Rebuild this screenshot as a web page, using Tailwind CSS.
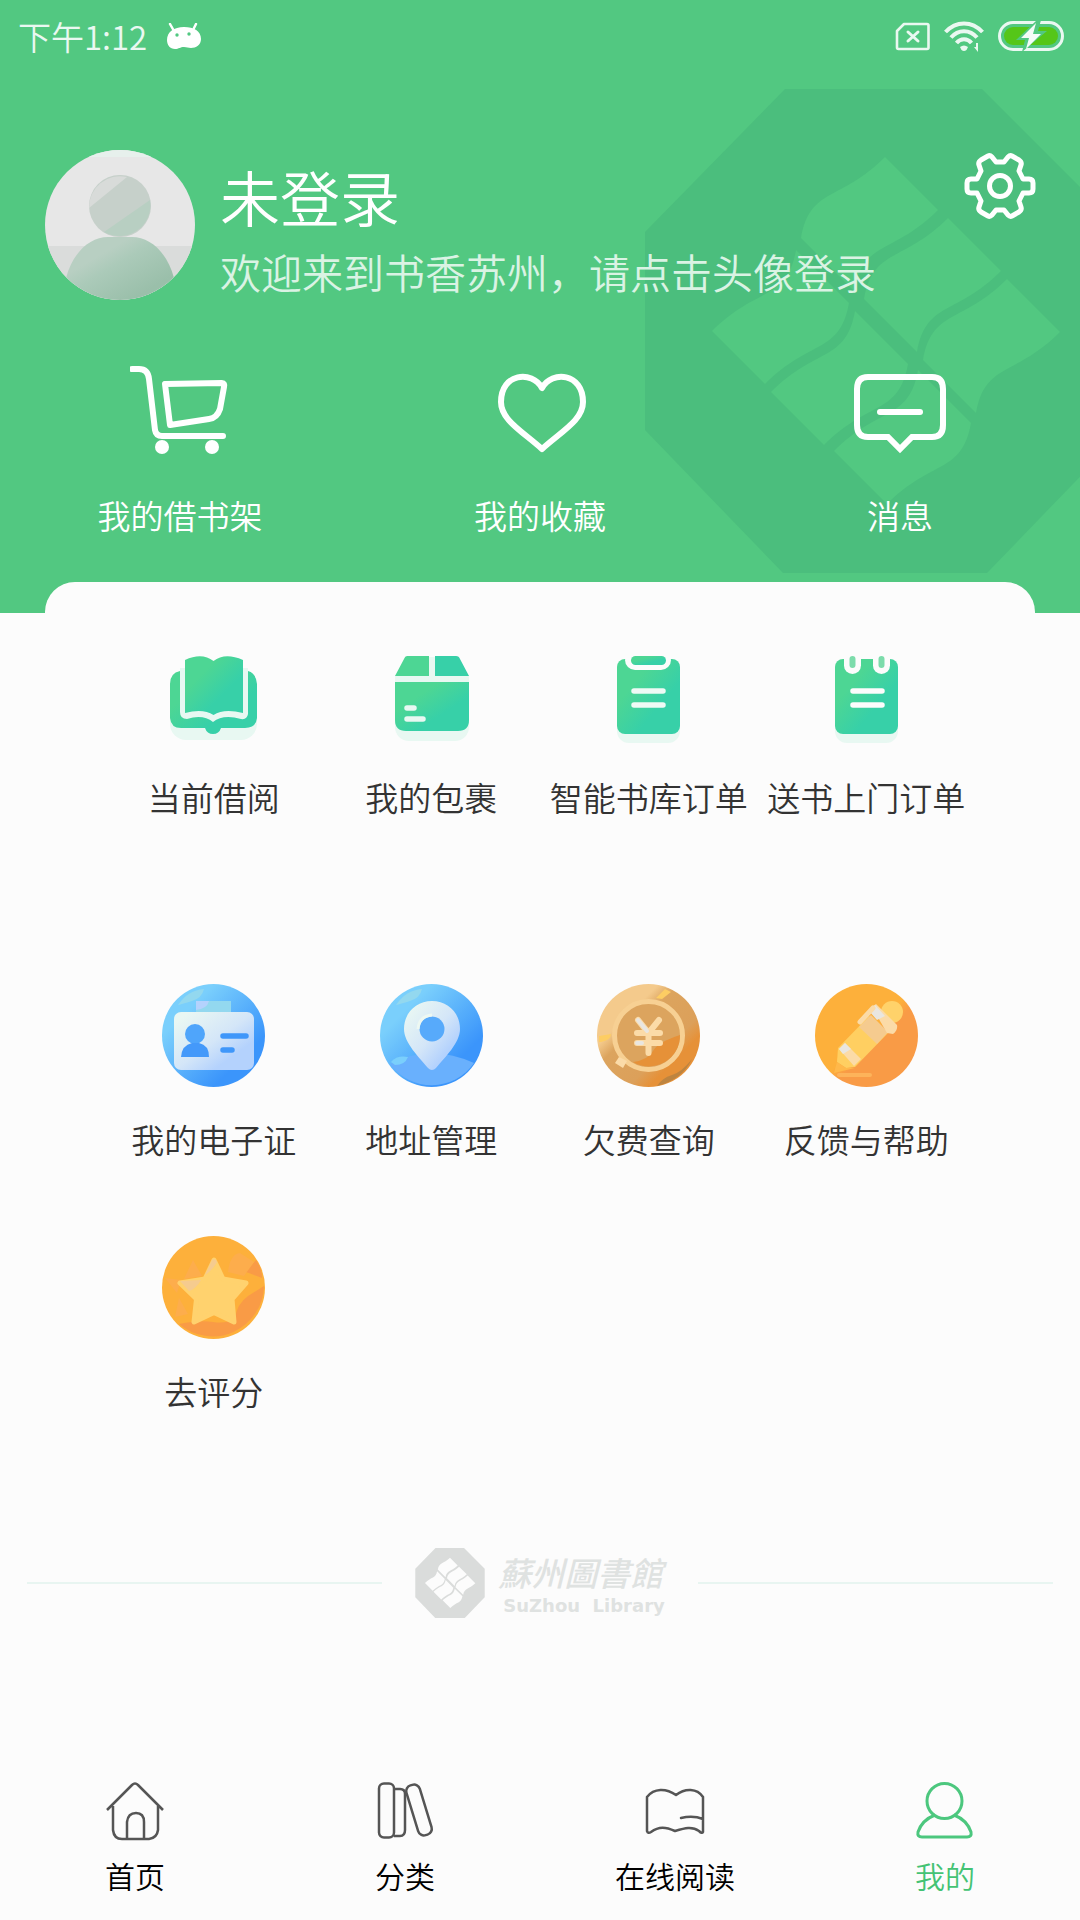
<!DOCTYPE html>
<html lang="zh-CN">
<head>
    <meta charset="UTF-8">
    <meta name="viewport" content="width=device-width, initial-scale=1.0">
    <title>书香苏州</title>
    <script src="https://cdn.jsdelivr.net/npm/@tailwindcss/browser@4"></script>
    <style>
        body {
            font-family: 'Noto Sans CJK SC', 'Noto Sans', sans-serif;
        }
    </style>
</head>
<body class="min-h-screen flex flex-col bg-[#fcfcfc] text-[#333] font-[350]">
    <!-- shared gradients and the library emblem -->
    <svg class="absolute w-0 h-0" aria-hidden="true">
        <defs>
            <linearGradient id="green" x1="0" y1="0" x2="1" y2="1">
                <stop offset=".3" stop-color="#4dd694" />
                <stop offset=".65" stop-color="#37d0a8" />
            </linearGradient>
            <linearGradient id="blue" x1="0" y1="0" x2="1" y2="1">
                <stop offset=".25" stop-color="#7acffc" />
                <stop offset=".75" stop-color="#3b95fb" />
            </linearGradient>
            <linearGradient id="paper" x1="0" y1="0" x2="1" y2="1">
                <stop offset=".1" stop-color="#e9f7f3" />
                <stop offset=".5" stop-color="#d4e6f8" />
                <stop offset=".75" stop-color="#b4d2fd" />
            </linearGradient>
            <linearGradient id="gold" x1="0" y1="0" x2="1" y2="1">
                <stop offset=".3" stop-color="#f4ca8c" />
                <stop offset=".4" stop-color="#dca45e" />
                <stop offset=".65" stop-color="#dca05a" />
                <stop offset=".75" stop-color="#e69138" />
            </linearGradient>
            <linearGradient id="orange" x1="0" y1="0" x2="1" y2="1">
                <stop offset=".5" stop-color="#fdb03b" />
                <stop offset=".58" stop-color="#f99b46" />
            </linearGradient>
            <linearGradient id="body" x1="0" y1="0" x2="1" y2="1">
                <stop offset=".3" stop-color="#b8cfc2" />
                <stop offset=".45" stop-color="#abcab9" />
                <stop offset=".8" stop-color="#9abfaa" />
            </linearGradient>
            <path id="emblem" fill-rule="evenodd" d="M140 0H337L480 143V341L342 484H138L0 341V143Z
                M240 68l53 53c-45 45-75 30-84 81l-53-53c9-51 39-36 84-81Z
                M303 129l53 53c-45 45-75 30-84 81l-53-53c9-51 39-36 84-81Z
                M362 190l53 53c-45 45-75 30-84 81l-53-53c9-51 39-36 84-81Z
                M151 161l53 53c-9 51-39 36-84 81l-53-53c45-45 75-30 84-81Z
                M210 222l53 53c-9 51-39 36-84 81l-53-53c45-45 75-30 84-81Z
                M273 281l53 53c-9 51-39 36-84 81l-53-53c45-45 75-30 84-81Z" />
        </defs>
    </svg>

    <header class="relative overflow-hidden bg-[#52c881] text-white pb-[74px]">
        <svg class="absolute top-[89px] right-0 w-[435px] h-[484px] text-[#4bbe7d]" viewBox="0 0 435 484" fill="currentColor"><use href="#emblem" /></svg>

        <div class="relative flex items-center justify-between h-[72px] pl-[18px] pr-4">
            <div class="flex items-center gap-5">
                <span class="text-[33px] leading-[40px] text-[#eaf8f1]">下午1:12</span>
                <svg class="w-[34px] h-[27px]" viewBox="0 0 34 27">
                    <path d="M3 1l4 7M29 1l-3 6" stroke="#fff" stroke-width="2.5" stroke-linecap="round" />
                    <path fill="#fff" d="M0 17C0 9 7 4 17 4s17 4 17 12c0 6-5 9-10 9-3 0-4-1-7-1-4 0-5 2-9 2-5 0-8-4-8-9Z" />
                    <circle cx="10" cy="12" r="1.7" fill="#52c881" />
                    <circle cx="22" cy="11" r="1.7" fill="#52c881" />
                </svg>
            </div>
            <div class="flex items-center gap-[14px]">
                <svg class="w-[35px] h-[29px]" viewBox="0 0 35 29" fill="none" stroke="#eaf8f1" stroke-width="2.6" stroke-linejoin="round" stroke-linecap="round">
                    <path d="M9 2H32Q33.500 2 33.500 3.500V25.500Q33.500 27 32 27H3.500Q2 27 2 25.500V9Z" />
                    <path d="M13 10l10 9M23 10l-10 9" stroke-width="3" />
                </svg>
                <svg class="w-10 h-[31px]" viewBox="0 0 40 31" fill="none" stroke="#eaf8f1" stroke-width="4">
                    <path d="M1.500 11C12-.5 28-.5 38.500 11M7 16.500c7-8.500 19-8.500 26 0M12.500 22c4-5 11-5 15 0" />
                    <path fill="#eaf8f1" stroke="none" d="M16 26q4-3 8 0l-1.500 3q-2.500 2-5 0ZM32 22h2v9l-4-5h2Z" />
                </svg>
                <svg class="w-[66px] h-[30px]" viewBox="0 0 66 30">
                    <rect x="1.500" y="1.500" width="63" height="27" rx="13.500" fill="none" stroke="#eaf8f1" stroke-width="3" />
                    <rect x="6" y="6" width="54" height="18" rx="9" fill="#55c618" />
                    <path fill="#52c881" d="M39-1 18 19h9l-3 12 25-21h-9l3-11Z" />
                    <path fill="#f4fcf8" d="M38 2 23 17h8l-3 11 15-15h-8Z" />
                </svg>
            </div>
        </div>

        <div class="relative flex items-start px-[45px] pt-[78px]">
            <a href="#login" aria-label="头像" class="shrink-0">
                <svg class="w-[150px] h-[150px]" viewBox="0 0 150 150">
                    <clipPath id="round"><circle cx="75" cy="75" r="75" /></clipPath>
                    <g clip-path="url(#round)">
                        <path fill="#e7e7e7" d="M0 0h150v150H0Z" />
                        <path fill="#dadcdb" d="M0 96h150v54H0Z" />
                        <path fill="#e7f0ec" d="M40 0h70v7H40Z" />
                        <path fill="url(#body)" d="M21 128C28 102 45 87 63 87h24c18 0 35 15 42 41v22H21Z" />
                        <circle cx="75" cy="56" r="31" fill="#c6d0ca" />
                        <path fill="#d8dbd9" d="M44 58A31 31 0 0 1 82 27Z" />
                        <path fill="#b8cfc2" d="M105 50A31 31 0 0 1 59 82Z" />
                    </g>
                </svg>
            </a>
            <div class="grow pl-[25px] pt-2">
                <h1 class="text-[60px] leading-[76px]">未登录</h1>
                <p class="mt-3 text-[41px] leading-[50px] text-[#daf3e4] whitespace-nowrap">欢迎来到书香苏州，请点击头像登录</p>
            </div>
            <button type="button" aria-label="设置" class="absolute top-[78px] right-11">
                <svg class="w-[72px] h-[72px]" viewBox="0 0 72 72" fill="none" stroke="#fff" stroke-width="5" stroke-linejoin="round">
                    <path d="M32 12h8l4-5q2-2 4-1l7 4q3 2 2 5l-2 6 4 8h6q4 0 4 4v6q0 4-4 4h-6l-4 8 2 6q1 3-2 5l-7 4q-2 1-4-1l-4-5h-8l-4 5q-2 2-4 1l-7-4q-3-2-2-5l2-6-4-8H7q-4 0-4-4v-6q0-4 4-4h6l4-8-2-6q-1-3 2-5l7-4q2-1 4 1Z" />
                    <circle cx="36" cy="36" r="10.500" />
                </svg>
            </button>
        </div>

        <nav class="relative grid grid-cols-3 pt-[65px] text-[33px] leading-[48px]">
            <a href="#cart" class="flex flex-col items-center gap-9">
                <svg class="w-[100px] h-[90px]" viewBox="0 0 100 90" fill="none" stroke="#fff" stroke-width="6" stroke-linecap="round" stroke-linejoin="round">
                    <path d="M2 4h7q9 0 10 10l6 51q1 6 7 6h61" />
                    <path d="M35 19l57-1q3 0 2 4l-4 22q-3 9-11 10L40 60Z" />
                    <circle cx="32" cy="82" r="7" fill="#fff" stroke="none" />
                    <circle cx="82" cy="82" r="7" fill="#fff" stroke="none" />
                </svg>
                <span>我的借书架</span>
            </a>
            <a href="#favorites" class="flex flex-col items-center gap-9">
                <svg class="w-[100px] h-[90px]" viewBox="0 0 100 90" fill="none" stroke="#fff" stroke-width="6" stroke-linejoin="round">
                    <path d="M52 23C42 5 11 8 11 37 11 55 32 66 52 84 72 66 93 55 93 37 93 8 62 5 52 23Z" />
                </svg>
                <span>我的收藏</span>
            </a>
            <a href="#messages" class="flex flex-col items-center gap-9">
                <svg class="w-[100px] h-[90px]" viewBox="0 0 100 90" fill="none" stroke="#fff" stroke-width="6" stroke-linecap="round">
                    <path d="M18 12H82Q93 12 93 24V60Q93 72 82 72H62L50 84 38 72H18Q7 72 7 60V24Q7 12 18 12Z" />
                    <path d="M30 47h40" />
                </svg>
                <span>消息</span>
            </a>
        </nav>
    </header>

    <main class="relative -mt-[31px] mx-[45px] px-[60px] pt-[60px] bg-[#fcfcfc] rounded-t-[30px] text-[33px] leading-[48px] whitespace-nowrap">
        <section class="grid grid-cols-4">
            <a href="#borrowed" class="flex flex-col items-center gap-7">
                <svg class="w-[103px] h-[103px]" viewBox="0 0 103 103">
                    <rect x="8" y="60" width="87" height="38" rx="16" fill="#e8f8f2" />
                    <path fill="url(#green)" d="M18 29Q8 31 8 42V76Q9 86 19 86H43Q45 92 51 92T59 86H83Q94 86 95 76V42Q94 31 86 29L80 74H24Z" />
                    <path fill="#e8f8f2" d="M18 26h68v46q-1 6-7 5Q61 72 51 80 41 72 25 77q-7 0-7-7Z" />
                    <path fill="url(#green)" d="M23 18Q40 10 51.500 19 63 10 81 18V71Q62 66 51.500 73 41 66 23 71Z" />
                </svg>
                <span>当前借阅</span>
            </a>
            <a href="#parcels" class="flex flex-col items-center gap-7">
                <svg class="w-[103px] h-[103px]" viewBox="0 0 103 103">
                    <rect x="15" y="60" width="74" height="39" rx="14" fill="#e8f8f2" />
                    <path fill="#e8f8f2" d="M15 33h74v9H15ZM48 15h8v20h-8Z" />
                    <path fill="#4dd694" d="M27 14H49V34H15L24 17Q25 14 27 14Z" />
                    <path fill="#37d0a8" d="M55 14H76Q79 14 80 17L89 34H55Z" />
                    <path fill="url(#green)" d="M15 40H89V78Q89 89 78 89H26Q15 89 15 78Z" />
                    <path stroke="#e8f8f2" stroke-width="5.500" stroke-linecap="round" d="M27 66h7M27 77h16" />
                </svg>
                <span>我的包裹</span>
            </a>
            <a href="#smart-orders" class="flex flex-col items-center gap-7">
                <svg class="w-[103px] h-[103px]" viewBox="0 0 103 103">
                    <rect x="20" y="60" width="63" height="41" rx="12" fill="#e8f8f2" />
                    <rect x="20" y="17" width="63" height="75" rx="8" fill="url(#green)" />
                    <rect x="28" y="8" width="46" height="20" rx="10" fill="#fcfcfc" />
                    <rect x="34" y="14" width="35" height="9" rx="4.500" fill="url(#green)" />
                    <path stroke="#eefaf5" stroke-width="5.500" stroke-linecap="round" d="M37 49h29M37 63h29" />
                </svg>
                <span>智能书库订单</span>
            </a>
            <a href="#delivery-orders" class="flex flex-col items-center gap-7">
                <svg class="w-[103px] h-[103px]" viewBox="0 0 103 103">
                    <rect x="20" y="60" width="63" height="41" rx="12" fill="#e8f8f2" />
                    <rect x="20" y="17" width="63" height="75" rx="8" fill="url(#green)" />
                    <rect x="29" y="6" width="17" height="26" rx="8.500" fill="#fcfcfc" />
                    <rect x="58" y="6" width="17" height="26" rx="8.500" fill="#fcfcfc" />
                    <path stroke="#7cdcab" stroke-width="6" stroke-linecap="round" d="M37.500 17v6M66.500 17v6" />
                    <path stroke="#fcfcfc" stroke-width="5.500" stroke-linecap="round" d="M38 49h29M38 63h29" />
                </svg>
                <span>送书上门订单</span>
            </a>
        </section>

        <section class="grid grid-cols-4 gap-y-[73px] mt-[163px]">
            <a href="#card" class="flex flex-col items-center gap-7">
                <svg class="w-[103px] h-[103px]" viewBox="0 0 103 103">
                    <circle cx="51.500" cy="51.500" r="51.500" fill="url(#blue)" />
                    <path fill="#93d8ef" d="M16 21Q26 6 42 5q-2 9-12 12T16 21ZM34 17H69V29H34Z" />
                    <path fill="#b4d2fd" d="M34 17h13q-2 8-13 9Z" />
                    <rect x="12" y="28" width="80" height="58" rx="7" fill="url(#paper)" />
                    <circle cx="33" cy="50" r="10" fill="#4fa5fb" />
                    <path fill="#4499fa" d="M19 73Q20 61 30 59h7q10 2 10 14Z" />
                    <path stroke="#3f97fa" stroke-width="5.500" stroke-linecap="round" d="M61 52h23M61 66h9" />
                </svg>
                <span>我的电子证</span>
            </a>
            <a href="#addresses" class="flex flex-col items-center gap-7">
                <svg class="w-[103px] h-[103px]" viewBox="0 0 103 103">
                    <circle cx="51.500" cy="51.500" r="51.500" fill="url(#blue)" />
                    <path fill="#93d8ef" d="M16 21Q26 6 42 5q-2 9-12 12T16 21Z" />
                    <path fill="#69b0fd" d="M10 80Q50 59 94 79A51.500 51.500 0 0 1 10 80Z" />
                    <path fill="#7acffc" d="M11 78q6-7 17-5-3 8-13 8Z" />
                    <path fill="url(#paper)" d="M52 17C36 17 24 29 24 45c0 14 15 28 24 39q4 4 8 0c9-11 24-25 24-39C80 29 68 17 52 17Z" />
                    <circle cx="52" cy="45" r="12.500" fill="#57aafb" />
                    <path d="M38 45q1-13 14-14" fill="none" stroke="#edf8f2" stroke-width="3" />
                </svg>
                <span>地址管理</span>
            </a>
            <a href="#fees" class="flex flex-col items-center gap-7">
                <svg class="w-[103px] h-[103px]" viewBox="0 0 103 103">
                    <circle cx="51.500" cy="51.500" r="51.500" fill="url(#gold)" />
                    <path fill="#fdcd63" d="M2 52l12-2q0 6-10 8H2ZM59 14l9-9 6 3-9 7Z" />
                    <path fill="#bd8440" d="M95 75Q85 96 60 102q5-8 15-11t20-16Z" />
                    <circle cx="51.500" cy="51.500" r="34" fill="#dca45e" stroke="#f7d093" stroke-width="5" />
                    <path fill="#e69138" d="M83 51A31 31 0 0 1 36 78q15-2 20-11t27-16Z" />
                    <path fill="#fbdba8" d="M22 73l8 4-4 7-8-5Z" />
                    <path fill="none" stroke="#fbdba8" stroke-width="6" stroke-linecap="round" stroke-linejoin="round" d="M41 36l10.500 13L62 36M40 49h23M40 59h23M51.500 49v20" />
                    <path stroke="#e9e6e0" stroke-width="4" stroke-linecap="round" d="M41 36l9 11M40 59h5" />
                </svg>
                <span>欠费查询</span>
            </a>
            <a href="#feedback" class="flex flex-col items-center gap-7">
                <svg class="w-[103px] h-[103px]" viewBox="0 0 103 103">
                    <circle cx="51.500" cy="51.500" r="51.500" fill="url(#orange)" />
                    <circle cx="77" cy="28" r="11" fill="#ffd26a" />
                    <path fill="#ffcf61" d="M23 64 54 32 73 49 40 83 31 84 22 78Z" />
                    <path fill="#ffb84a" d="M22 78 31 84 40 84 19 89Z" />
                    <path fill="#f5cb8f" d="M44 43 56 31 73 48 62 60Z" />
                    <path fill="#fbdba8" d="M24 65 30 59 46 75 39 82Z" />
                    <path fill="#e9e6e0" d="M24 65 30 59 36 65 28 70Z" />
                    <path fill="#fbdba8" d="M57 23 61 20 82 41Q83 46 78 50L72 49Z" />
                    <path fill="#e9e6e0" d="M54 27 60 21 70 32 62 36Z" />
                    <path fill="none" stroke="#fbdba8" stroke-width="5" stroke-linecap="round" d="M45 38 58 24" />
                    <path stroke="#fdb35a" stroke-width="4" stroke-linecap="round" d="M24 91h31" />
                </svg>
                <span>反馈与帮助</span>
            </a>
            <a href="#rate" class="flex flex-col items-center gap-7">
                <svg class="w-[103px] h-[103px]" viewBox="0 0 103 103">
                    <circle cx="51.500" cy="51.500" r="51.500" fill="#fdb03b" />
                    <path fill="#f99b46" d="M102 50A51.500 51.500 0 0 1 17 88q20-4 34-2t22-4q2-14 13-22ZM84 36l10-12q6 8 6 18Z" />
                    <path fill="#fdad4c" d="M3 42l16 2-4 13ZM31 24l9 16-18 3ZM17 62l9 16-13 3ZM66 36q2-18 12-19l14 9-10 14Z" />
                    <path fill="#ffd26e" stroke="#ffd26e" stroke-width="5" stroke-linejoin="round" d="M52 24 61 43 84 47 70 63 72 86 52 76.500 32 86 34.500 63 18 47 43 43Z" />
                    <path fill="#f5cb8f" d="M18 45l21-1q-5 9-12 11ZM50 24q3-3 5 2-4 8-12 13Z" />
                </svg>
                <span>去评分</span>
            </a>
        </section>
    </main>

    <div class="flex items-center mt-[133px] px-[27px]">
        <div class="grow h-[2px] bg-[#e8f5f1]"></div>
        <div class="flex items-center gap-[13px] px-[33px] text-[#dfe2e1]">
            <svg class="w-[70px] h-[70px] text-[#dadcdb]" viewBox="0 0 480 484" fill="currentColor"><use href="#emblem" /></svg>
            <div class="whitespace-nowrap">
                <div class="font-['Noto_Sans_CJK_TC',sans-serif] text-[33px] leading-[46px] italic font-medium">蘇州圖書館</div>
                <div class="font-['DejaVu_Sans',sans-serif] text-[18px] leading-[22px] pl-[5px] font-bold whitespace-pre">SuZhou  Library</div>
            </div>
        </div>
        <div class="grow h-[2px] bg-[#e8f5f1]"></div>
    </div>

    <nav class="grid grid-cols-4 mt-auto pb-[25px] text-[30px] leading-[40px] text-black">
        <a href="#home" class="flex flex-col items-center gap-[14px]">
            <svg class="w-[60px] h-[60px]" viewBox="0 0 60 60" fill="none" stroke="#555" stroke-width="2.500" stroke-linejoin="round">
                <path d="M2 29 27 4Q30 1 33 4L58 29M8 25V49Q9 58 17 58H44Q52 57 53 49V25M22 58V41Q23 32 31 32T39 41V58" />
            </svg>
            <span>首页</span>
        </a>
        <a href="#category" class="flex flex-col items-center gap-[14px]">
            <svg class="w-[60px] h-[60px]" viewBox="0 0 60 60" fill="none" stroke="#555" stroke-width="2.500">
                <rect x="4" y="2.500" width="15" height="54" rx="5" />
                <path d="M19 8h6q5 0 5 5v36q0 6-5 6h-6" />
                <rect x="37" y="3" width="14" height="52" rx="6" transform="rotate(-17 44 29)" />
            </svg>
            <span>分类</span>
        </a>
        <a href="#reading" class="flex flex-col items-center gap-[14px]">
            <svg class="w-[60px] h-[60px]" viewBox="0 0 60 60" fill="none" stroke="#555" stroke-width="2.500" stroke-linecap="round" stroke-linejoin="round">
                <path d="M2 16C9 7 21 7 31 14 40 7 52 7 58 16V51Q57 53 54 50C47 45 40 47 30 50 21 46 14 45 6 51Q3 53 2 50ZM36 37q12-3 22 1" />
            </svg>
            <span>在线阅读</span>
        </a>
        <a href="#mine" class="flex flex-col items-center gap-[14px] text-[#44c374]">
            <svg class="w-[60px] h-[60px]" viewBox="0 0 60 60" fill="none" stroke="#4cc77e" stroke-width="3">
                <circle cx="29.500" cy="20" r="17.500" />
                <path d="M20 34Q7 39 3 51 2 56 7 56H52Q57 56 56 51 52 39 39 34" />
            </svg>
            <span>我的</span>
        </a>
    </nav>
</body>
</html>
